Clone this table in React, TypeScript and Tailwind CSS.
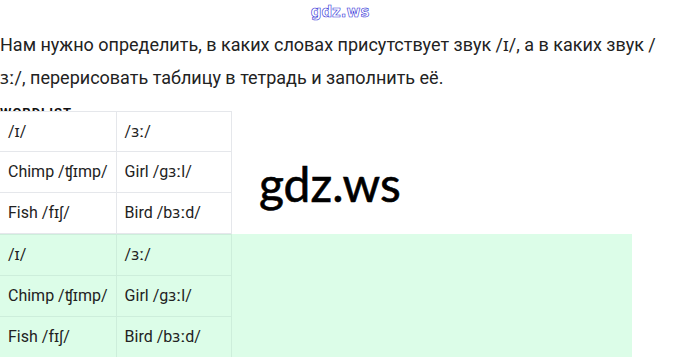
import React from "react";

const rows = [
  ["/ɪ/", "/ɜː/"],
  ["Chimp /ʧɪmp/", "Girl /gɜːl/"],
  ["Fish /fɪʃ/", "Bird /bɜːd/"],
];

function Table({ green }: { green?: boolean }) {
  const border = green ? "border-[#cdeedb]" : "border-[#e5e7eb]";
  return (
    <table className={`border-collapse w-[232px] ${green ? "" : "bg-white"}`}>
      <tbody>
        {rows.map((r, i) => (
          <tr key={i} className={!green && i === 0 ? "h-[40px]" : "h-[41px]"}>
            {r.map((c, j) => (
              <td
                key={j}
                className={`border ${border} ${j === 0 ? "w-[115px] border-l-0" : ""} px-[8px] text-[16px] text-[#222] align-middle whitespace-nowrap`}
              >
                {c}
              </td>
            ))}
          </tr>
        ))}
      </tbody>
    </table>
  );
}

export default function App() {
  return (
    <div className="relative w-[680px] h-[357px] overflow-hidden bg-white font-['Roboto','Noto_Sans',sans-serif]">
      <div className="flex justify-center pt-[2px] h-[22px]">
        <span className="text-[15px] font-bold leading-[20px] text-white [-webkit-text-stroke:0.6px_#3434d8] font-['DejaVu_Sans',sans-serif]">
          gdz.ws
        </span>
      </div>
      <p className="text-[18px] leading-[33px] text-[#222] pt-[6px]">
        Нам нужно определить, в каких словах присутствует звук /ɪ/, а в каких звук /<wbr />ɜː/, перерисовать таблицу в тетрадь и заполнить её.
      </p>
      <div className="mt-[12px] text-[13px] font-bold leading-[14px] h-[14px] text-[#111] tracking-[1px]">WORDLIST</div>
      <div className="-mt-[9px] relative">
        <Table />
      </div>
      <div className="w-[632px] bg-[#dcfde8]">
        <Table green />
      </div>
      <div className="absolute left-[259px] top-[156px] text-[48px] leading-[56px] text-black [-webkit-text-stroke:0.6px_black] font-['Lato',sans-serif]">
        gdz.ws
      </div>
    </div>
  );
}
